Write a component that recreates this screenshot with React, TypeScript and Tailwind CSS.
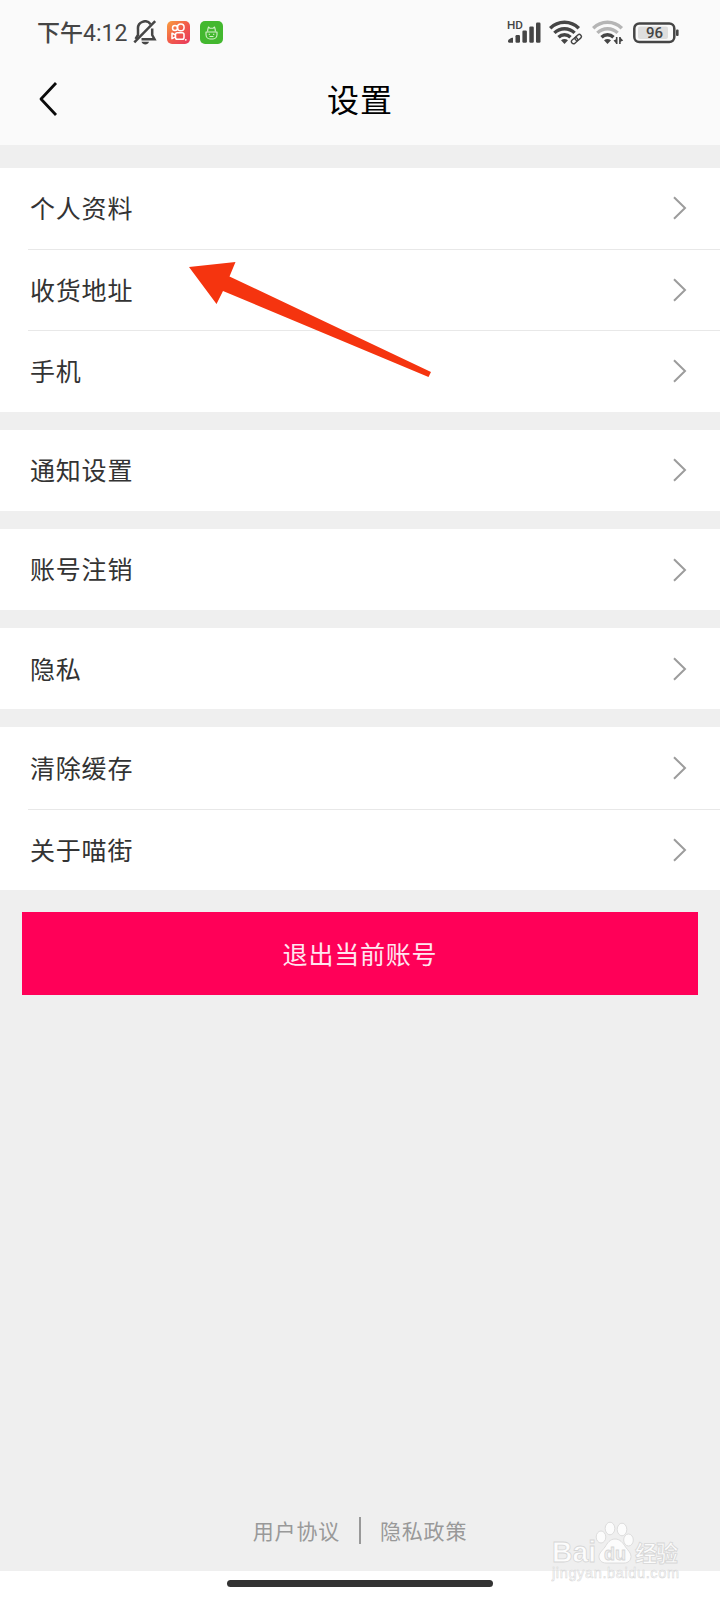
import type { ReactNode } from 'react';

interface SettingsGroup {
  id: string;
  items: string[];
}

const GROUPS: SettingsGroup[] = [
  { id: 'profile', items: ['个人资料', '收货地址', '手机'] },
  { id: 'notification', items: ['通知设置'] },
  { id: 'account', items: ['账号注销'] },
  { id: 'privacy', items: ['隐私'] },
  { id: 'misc', items: ['清除缓存', '关于喵街'] },
];

const INK = '#454545';

function BellOffIcon() {
  return (
    <svg width="24" height="25" viewBox="0 0 24 25" fill="none" stroke={INK} strokeWidth="2.500">
      <path d="M17.600 4.200A7 7 0 0 0 5 9v6l-2.400 4" />
      <path d="M19.200 8.500V15l2.300 4.200H8.500" />
      <path d="M22.200 1.200 1.300 22.300" />
      <path d="M8.500 21.700h7.500c-.6 1.900-2 2.700-3.700 2.700s-3.200-.8-3.800-2.700z" fill={INK} stroke="none" />
    </svg>
  );
}

function VideoAppIcon() {
  return (
    <svg width="23" height="23" viewBox="0 0 23 23" fill="none">
      <defs>
        <linearGradient id="videoApp" x1="0" y1="0" x2="1" y2="1">
          <stop offset="0" stopColor="#f9a040" />
          <stop offset="0.5" stopColor="#f15a4a" />
          <stop offset="1" stopColor="#e8385e" />
        </linearGradient>
      </defs>
      <rect width="23" height="23" rx="5" fill="url(#videoApp)" />
      <g stroke="#fff" strokeWidth="1.500">
        <circle cx="8" cy="7" r="2.500" />
        <circle cx="13.800" cy="6.400" r="3.300" />
        <rect x="8.500" y="11.700" width="8.500" height="6.500" rx="1.800" />
        <path d="m8.500 14-3.500-1.800v5.500l3.500-1.800" strokeLinejoin="round" />
      </g>
      <circle cx="18.800" cy="18.800" r="0.900" fill="#fff" />
    </svg>
  );
}

function CatAppIcon() {
  return (
    <svg width="23" height="23" viewBox="0 0 23 23" fill="none">
      <rect width="23" height="23" rx="5" fill="#43b82f" />
      <g stroke="#d5f0cb" strokeWidth="1.100" strokeLinejoin="round">
        <path d="M7.600 10.500c0-1.600.3-3 .9-4.500l1.500 1.300h3L14.500 6c.6 1.500.9 2.900.9 4.500" />
        <path d="M6 11h11v2.500c0 2.600-1.800 4.500-4 4.500h-3c-2.200 0-4-1.900-4-4.500z" />
        <path d="M9.300 12.800v1.200M13.700 12.800v1.200M9.500 15.500h4" />
      </g>
    </svg>
  );
}

function SignalIcon() {
  return (
    <svg width="34" height="25" viewBox="0 0 34 25" fill={INK}>
      <text x="0" y="9.300" fontSize="11" fontWeight="500" fontFamily="Roboto, sans-serif" textLength="16" lengthAdjust="spacingAndGlyphs">
        HD
      </text>
      <path d="M1 21.500c0-2 2.500-3.800 5-3.800v5H2.200c-.8 0-1.200-.5-1.200-1.200z" />
      <rect x="8.500" y="15" width="4.500" height="7.800" rx="1.200" />
      <rect x="15.400" y="10.600" width="4.500" height="12.200" rx="1.200" />
      <rect x="22.300" y="6.500" width="4.500" height="16.300" rx="1.200" />
      <rect x="29" y="2.500" width="4.500" height="20.300" rx="1.200" />
    </svg>
  );
}

interface WifiIconProps {
  outer: string;
  children: ReactNode;
}

function WifiIcon({ outer, children }: WifiIconProps) {
  return (
    <svg width="34" height="25" viewBox="0 0 34 25" fill="none" strokeWidth="3.400">
      <path d="M1.200 8.200a20 20 0 0 1 28.600 0" stroke={outer} />
      <path d="M5.400 12.900a14.300 14.300 0 0 1 20.200 0" stroke={outer} />
      <path d="M9.500 17.200a8.700 8.700 0 0 1 12 0" stroke={INK} />
      <path d="M12 20.300q3.500-2.600 7 0L15.500 24z" fill={INK} />
      {children}
    </svg>
  );
}

function BatteryIcon() {
  return (
    <svg width="46" height="22" viewBox="0 0 46 22" fill="none">
      <rect x="1.300" y="1.400" width="40" height="18.600" rx="5" stroke={INK} strokeWidth="2.500" />
      <rect x="5" y="4.500" width="30" height="12.500" rx="2" fill="#dedede" />
      <rect x="43" y="7.500" width="2.600" height="6.500" rx="1" fill={INK} />
      <text
        x="21.500"
        y="16"
        fontSize="15"
        fontWeight="500"
        fontFamily="Roboto, sans-serif"
        textAnchor="middle"
        fill={INK}
      >
        96
      </text>
    </svg>
  );
}

function StatusBar() {
  return (
    <div className="flex h-[60px] items-start justify-between pt-5 pr-[41px] pl-[37px]">
      <div className="flex h-[25px] items-center">
        <span className="w-[96px] text-[23px] leading-none font-medium whitespace-nowrap text-[#454545]">
          下午<span className="font-[Roboto] text-[23px] font-normal">4:12</span>
        </span>
        <BellOffIcon />
        <span className="ml-2.5">
          <VideoAppIcon />
        </span>
        <span className="ml-2.5">
          <CatAppIcon />
        </span>
      </div>
      <div className="flex h-[25px] items-center">
        <SignalIcon />
        <span className="ml-[8px]">
          <WifiIcon outer={INK}>
            <path d="m24 22.500 7-6" stroke="#fafafa" strokeWidth="6" />
            <g stroke={INK} strokeWidth="1.400">
              <rect x="-3.500" y="-2.100" width="7" height="4.200" rx="2.100" transform="translate(25.600 20.700) rotate(-42)" />
              <rect x="-3.500" y="-2.100" width="7" height="4.200" rx="2.100" transform="translate(29.200 17.500) rotate(-42)" />
            </g>
          </WifiIcon>
        </span>
        <span className="ml-[9px]">
          <WifiIcon outer="#b5b5b5">
            <path d="M24.700 17v7M27.900 17v7" stroke={INK} strokeWidth="1.600" />
            <path d="m21.500 20.500 3.200 3.500v-5zM31.200 20.500 27.900 17v5z" fill={INK} />
          </WifiIcon>
        </span>
        <span className="ml-[7px]">
          <BatteryIcon />
        </span>
      </div>
    </div>
  );
}

function NavBar() {
  return (
    <div className="grid h-[85px] grid-cols-[80px_1fr_80px] items-start">
      <button type="button" className="pt-[21px] pl-[38px]" aria-label="返回">
        <svg width="20" height="36" viewBox="0 0 20 36" fill="none" stroke="#0a0a0a" strokeWidth="2.800">
          <path d="M18 2 3 18l15 16" strokeLinejoin="round" />
        </svg>
      </button>
      <h1 className="pt-[14px] text-center text-[32px] leading-[48px] tracking-[1px] text-black">设置</h1>
    </div>
  );
}

function SettingsRow({ label, divided }: { label: string; divided: boolean }) {
  return (
    <li className="pl-7">
      <div
        className={`flex h-[81.3px] items-center justify-between pr-[33px] pl-0.5 ${
          divided ? 'border-t border-[#e8e8e8]' : ''
        }`}
      >
        <span className="pb-px text-[25px] tracking-[0.8px] text-[#333]">{label}</span>
        <svg width="15" height="24" viewBox="0 0 15 24" fill="none" stroke="#9c9c9c" strokeWidth="2">
          <path d="M2 1.200 13 12 2 22.800" />
        </svg>
      </div>
    </li>
  );
}

function PawLogo() {
  return (
    <svg width="132" height="62" viewBox="0 0 132 62" fill="#fcfcfc" stroke="#d6d6d6" strokeWidth="0.800">
      <text
        x="1"
        y="40.500"
        fontFamily="'Liberation Sans', sans-serif"
        fontWeight="700"
        fontSize="29"
        textLength="44"
        lengthAdjust="spacingAndGlyphs"
      >
        Bai
      </text>
      <ellipse cx="50" cy="16" rx="4.800" ry="6" />
      <ellipse cx="59" cy="7.500" rx="4.800" ry="6.300" />
      <ellipse cx="71" cy="8.500" rx="4.800" ry="6.300" />
      <ellipse cx="77.500" cy="19" rx="4.800" ry="6" />
      <path d="M64 18c5 0 8 4 10.500 8 3 4 5.500 6 5.500 9.500 0 4-3 6.500-7 6.500H55c-4.500 0-7-3-7-6.500 0-3.500 3.500-6 6-9.500 2.500-4 5-8 10-8z" />
      <text
        x="53"
        y="38.500"
        fill="#efefef"
        fontFamily="'Liberation Sans', sans-serif"
        fontWeight="700"
        fontSize="19"
        textLength="22"
        lengthAdjust="spacingAndGlyphs"
      >
        du
      </text>
      <text x="84" y="39.500" fontFamily="'Noto Sans CJK SC', sans-serif" fontWeight="700" fontSize="22" textLength="43">
        经验
      </text>
      <text
        x="1"
        y="57"
        fontFamily="'Liberation Sans', sans-serif"
        fontSize="14.500"
        strokeWidth="0.500"
        textLength="127"
      >
        jingyan.baidu.com
      </text>
    </svg>
  );
}

export default function App() {
  return (
    <div className="relative flex h-[1600px] w-[720px] flex-col overflow-hidden bg-[#efefef] font-['Noto_Sans_CJK_SC',sans-serif]">
      <header className="bg-[#fafafa]">
        <StatusBar />
        <NavBar />
      </header>

      <main className="flex flex-1 flex-col pt-[22.7px]">
        <div className="flex flex-col gap-[18px]">
          {GROUPS.map((group) => (
            <ul key={group.id} className="bg-white">
              {group.items.map((label, index) => (
                <SettingsRow key={label} label={label} divided={index > 0} />
              ))}
            </ul>
          ))}
        </div>

        <button
          type="button"
          className="mx-[22px] mt-[22px] h-[83px] bg-[#ff0058] text-[25px] tracking-[0.8px] text-[#ffe6f0]"
        >
          退出当前账号
        </button>

        <div className="mt-auto mb-[25px] flex items-center justify-center text-[21px] leading-[32px] tracking-[0.8px] text-[#999]">
          <span>用户协议</span>
          <span className="mr-[19px] ml-[19px] h-[27px] w-[2px] bg-[#999]" />
          <span>隐私政策</span>
        </div>
      </main>

      <div className="flex h-[29px] justify-center bg-white pt-[9px]">
        <div className="h-[7px] w-[266px] rounded-full bg-[#333]" />
      </div>

      {/* Pointer annotation over the list */}
      <svg className="absolute top-[255px] left-[185px]" width="250" height="130" viewBox="0 0 250 130">
        <path d="M4 12 50.500 7 44.500 21.500 246 117 243.500 122 38 36 31.500 49z" fill="#f5340f" />
      </svg>

      <div className="absolute top-[1521px] left-[551px]">
        <PawLogo />
      </div>
    </div>
  );
}
